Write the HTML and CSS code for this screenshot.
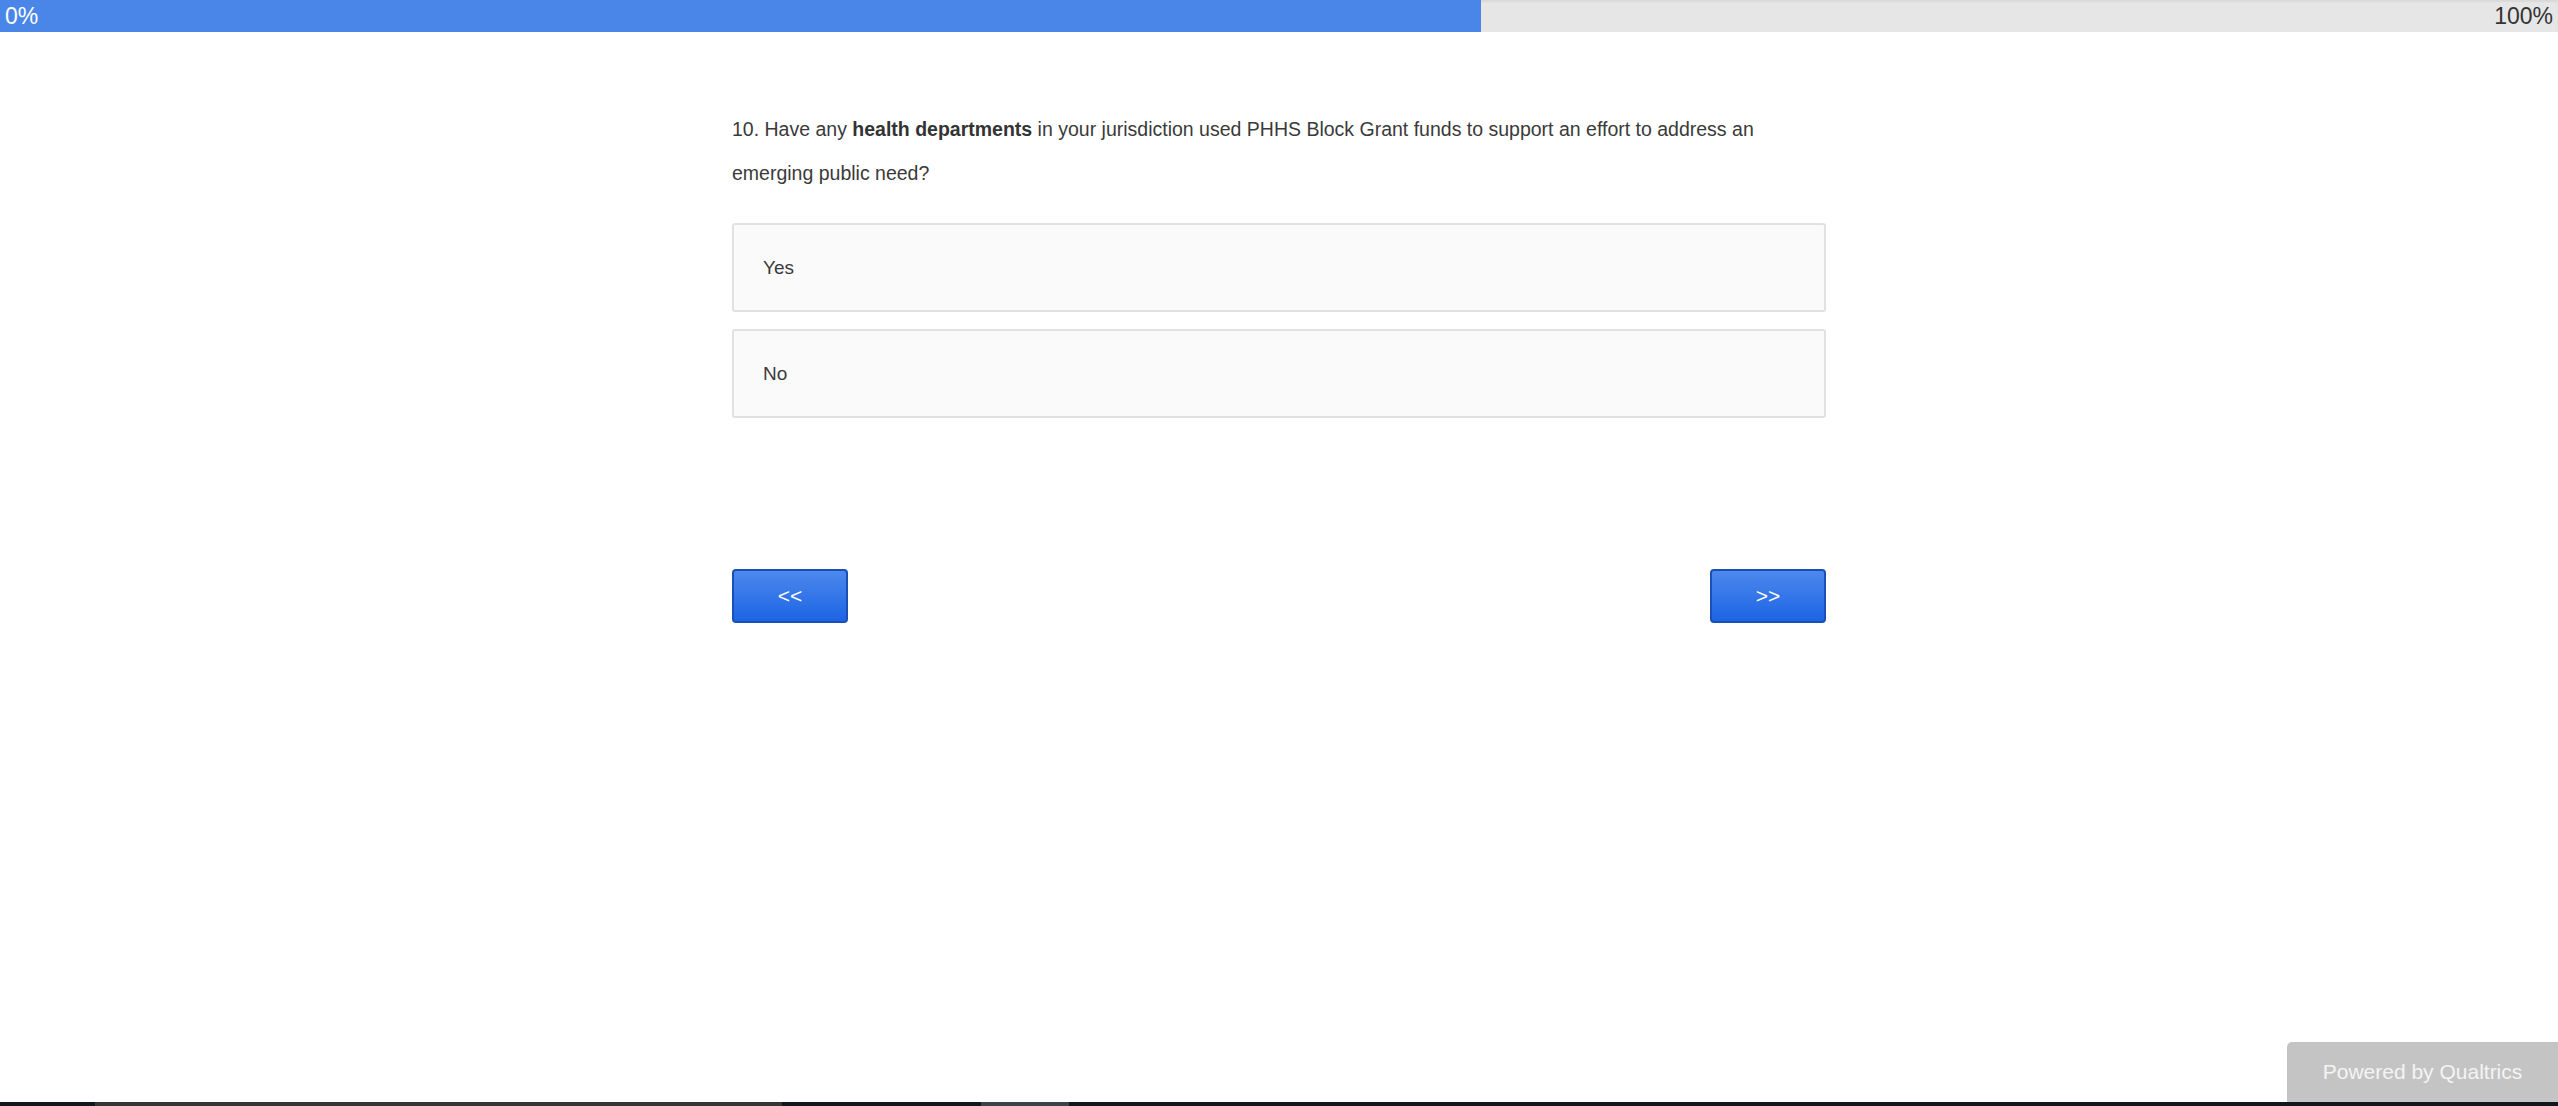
FILE: index.html
```html
<!DOCTYPE html>
<html lang="en">
<head>
    <meta charset="UTF-8">
    <meta name="viewport" content="width=device-width, initial-scale=1.0">
    <title>Survey</title>
    <link rel="stylesheet" href="styles.css">
</head>
<body>
    <div class="progress">
        <div class="progress-fill" style="width: 57.9%"></div>
        <span class="progress-label start">0%</span>
        <span class="progress-label end">100%</span>
    </div>

    <main class="skin">
        <div class="question-text">
            10. Have any <strong>health departments</strong> in your jurisdiction used PHHS Block Grant funds to support an effort to address an emerging public need?
        </div>

        <ul class="choices">
            <li class="choice">Yes</li>
            <li class="choice">No</li>
        </ul>

        <div class="buttons">
            <button class="nav-btn">&lt;&lt;</button>
            <button class="nav-btn">&gt;&gt;</button>
        </div>
    </main>

    <a class="powered" href="#">Powered by Qualtrics</a>

    <div class="taskbar">
        <span class="seg dark" style="width: 95px"></span>
        <span class="seg grey" style="width: 687px"></span>
        <span class="seg dark" style="width: 199px"></span>
        <span class="seg slate" style="width: 88px"></span>
        <span class="seg dark" style="flex: 1"></span>
    </div>
</body>
</html>
```

FILE: styles.css
```css
html, body {
    height: 100%;
}

body {
    font-family: "Liberation Sans", Arial, sans-serif;
    background-color: #fff;
    color: #333;
    margin: 0;
    padding: 0;
    display: flex;
    flex-direction: column;
}

.progress {
    position: relative;
    height: 32px;
    background-color: #e6e6e7;
    box-shadow: inset 0 2px 2px rgba(0, 0, 0, 0.06);
    display: flex;
    justify-content: space-between;
    align-items: center;
    flex-shrink: 0;
}

.progress-fill {
    position: absolute;
    left: 0;
    top: 0;
    bottom: 0;
    background-color: #4a86e8;
}

.progress-label {
    position: relative;
    font-size: 23px;
    padding: 0 5px;
}

.progress-label.start {
    color: #fff;
}

.progress-label.end {
    color: #333;
}

.skin {
    width: 1094px;
    margin: 0 auto;
    padding-top: 75px;
    flex: 1;
}

.question-text {
    font-size: 19.5px;
    line-height: 44px;
    color: #3a3a3a;
}

.question-text strong {
    font-weight: bold;
    color: #333;
}

.choices {
    list-style: none;
    margin: 28px 0 0 0;
    padding: 0;
    display: flex;
    flex-direction: column;
    gap: 17px;
}

.choice {
    background-color: #fafafa;
    border: 2px solid #e1e1e1;
    border-radius: 3px;
    height: 85px;
    padding-left: 29px;
    display: flex;
    align-items: center;
    font-size: 19px;
    color: #3a3a3a;
}

.buttons {
    display: flex;
    justify-content: space-between;
    margin-top: 151px;
}

.nav-btn {
    width: 116px;
    height: 54px;
    border: 2px solid #1a4fb5;
    border-radius: 4px;
    background: linear-gradient(to bottom, #4c88ed, #1d64e4);
    color: #fff;
    font-family: "Liberation Sans", Arial, sans-serif;
    font-size: 21px;
    cursor: pointer;
}

.nav-btn:hover {
    background: linear-gradient(to bottom, #3b78dd, #1655c9);
}

.powered {
    position: fixed;
    right: 0;
    bottom: 4px;
    width: 271px;
    height: 60px;
    background-color: #c4c4c5;
    border-top-left-radius: 5px;
    color: #f4f4f4;
    font-size: 21px;
    text-decoration: none;
    display: flex;
    align-items: center;
    justify-content: center;
}

.taskbar {
    height: 4px;
    display: flex;
    flex-shrink: 0;
}

.seg {
    display: block;
    height: 100%;
}

.seg.dark {
    background-color: #0f191d;
}

.seg.grey {
    background-color: #353535;
}

.seg.slate {
    background-color: #3a4347;
}
```
